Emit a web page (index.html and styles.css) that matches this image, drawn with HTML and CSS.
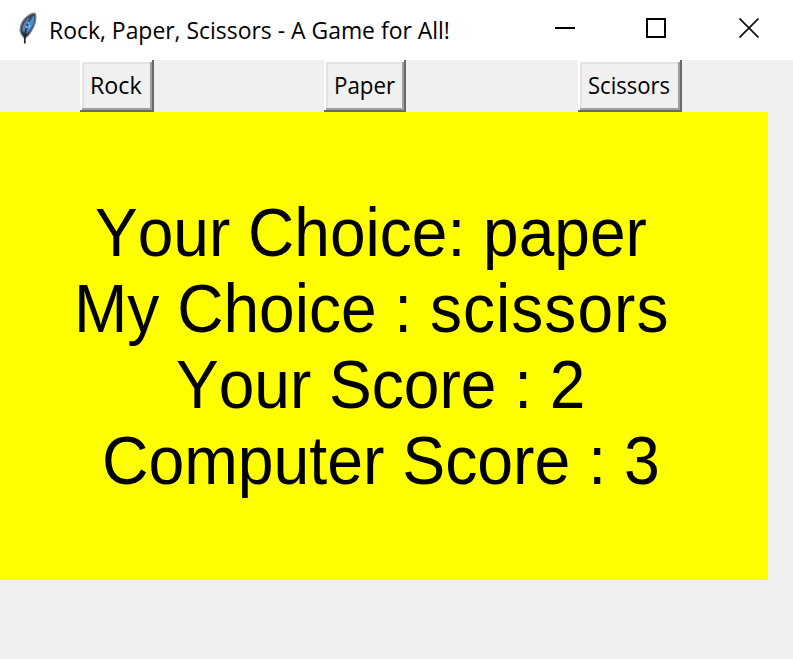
FILE: index.html
```html
<!DOCTYPE html>
<html lang="en">
<head>
<meta charset="utf-8">
<title>Rock, Paper, Scissors - A Game for All!</title>
<link rel="stylesheet" href="styles.css">
</head>
<body>
<header class="titlebar">
  <svg class="feather" width="22" height="34" viewBox="0 0 22 34">
    <path d="M6.200 26 C5 24 2 22 2 18 C2 12 6 6 11 3 C13.500 1.300 16.500 1 17.500 1.800 C18.600 7 17 13 14 18 C12 22 9 25.500 6.200 26 Z" fill="#3b4752" stroke="#85878a" stroke-width="1.200"/>
    <path d="M9 19 C9.500 12 12 6 16 3.500 C17 8 15.500 13 12.500 17.500 L8.500 22 Z" fill="#4c8cdc"/>
    <path d="M4.500 19 C4 13 7.500 8 12 5 L9 11 L7 20 Z" fill="#5689bd"/>
    <path d="M14.500 4 C10 9.500 7.200 17 6.500 24" fill="none" stroke="#2a4562" stroke-width="1.300"/>
    <path d="M3 20 L7 26 L11 21 L6.500 22 Z" fill="#20262c"/>
    <path d="M6.800 23V31.500" stroke="#20262c" stroke-width="1.700"/>
    <path d="M10 10 L10.500 12 M8.300 14 L9 16 M12 13L10.500 16" stroke="#9cc8f4" stroke-width="1.200"/>
  </svg>
  <h1 class="title">Rock, Paper, Scissors - A Game for All!</h1>
  <div class="controls">
    <svg width="20" height="20" viewBox="0 0 20 20"><path d="M0 10H20" stroke="#000" stroke-width="2"/></svg>
    <svg class="maximize" width="20" height="20" viewBox="0 0 20 20"><rect x="1" y="1" width="18" height="18" fill="none" stroke="#000" stroke-width="2"/></svg>
    <svg width="20" height="20" viewBox="0 0 20 20"><path d="M.5 .5L19.500 19.500M19.500 .5L.5 19.500" stroke="#111" stroke-width="1.700"/></svg>
  </div>
</header>
<main>
  <div class="choices">
    <button class="rock"><span>Rock</span></button>
    <button class="paper"><span>Paper</span></button>
    <button class="scissors"><span>Scissors</span></button>
  </div>
  <div class="score">
    <p class="yours">Your Choice: paper</p>
    <p class="mine">My Choice : <span>scissors</span></p>
    <p class="your-score">Your Score : 2</p>
    <p class="computer-score">Computer Score : 3</p>
  </div>
</main>
</body>
</html>
```
FILE: styles.css
```css
* { box-sizing: border-box; }
body {
  margin: 0;
  height: 659px;
  overflow: hidden;
  background: #f0f0f0;
  color: #000;
  font-family: "Open Sans", sans-serif;
}
.titlebar {
  display: flex;
  height: 60px;
  padding: 0 34px 0 18px;
  background: #fff;
}
.feather { margin-top: 12px; }
.title {
  margin: 0 0 0 9px;
  font-size: 24px;
  font-weight: 400;
  line-height: 60px;
  white-space: nowrap;
  transform: scaleX(0.955);
  transform-origin: left;
}
.controls {
  display: flex;
  width: 204px;
  flex: none;
  margin: 18px 0 0 auto;
}
.controls .maximize { margin: 0 73px 0 71px; }
.choices {
  display: flex;
  height: 52px;
  padding-left: 80px;
}
button {
  height: 52px;
  padding: 2px 0 4px 10px;
  border: 0;
  background: #f0f0f0;
  box-shadow:
    inset -2px -2px #696969,
    inset 2px 2px #fff,
    inset -4px -4px #a0a0a0,
    inset 4px 4px #e3e3e3;
  color: #000;
  font: 24px/46px "Open Sans", sans-serif;
  text-align: left;
}
button span {
  display: block;
  width: max-content;
  transform-origin: left;
}
.rock { width: 74px; }
.rock span { transform: scaleX(0.97); }
.paper { width: 82px; margin-left: 170px; }
.paper span { transform: scaleX(0.93); }
.scissors { width: 104px; margin-left: 172px; }
.scissors span { transform: scaleX(0.92); }
.score {
  width: 768px;
  height: 468px;
  padding-top: 83px;
  background: #ff0;
  font: 68.5px/76px "Liberation Sans", Arial, sans-serif;
  font-kerning: none;
}
.score p {
  width: max-content;
  margin: 0;
  white-space: pre;
  transform: scaleX(0.935);
  transform-origin: left;
}
.score .yours { margin-left: 95px; }
.score .mine { margin-left: 74px; }
.score .mine span { letter-spacing: 1.1px; }
.score .your-score { margin-left: 176px; }
.score .computer-score { margin-left: 102px; transform: scaleX(0.939); }
```
